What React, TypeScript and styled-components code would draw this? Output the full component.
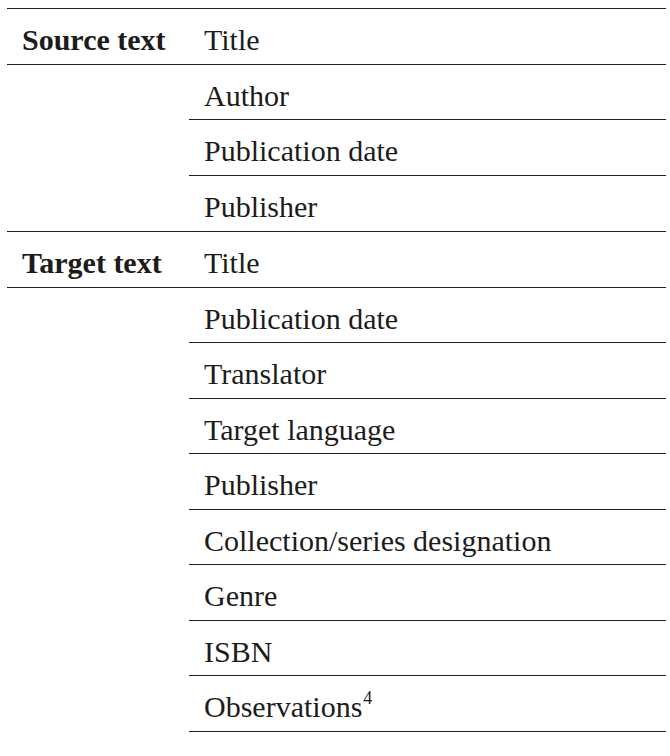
import styled, { createGlobalStyle } from "styled-components";

const GlobalStyle = createGlobalStyle`
  body {
    margin: 0;
    background: #ffffff;
    color: #1c1c1c;
    font-family: "Liberation Serif", "Times New Roman", serif;
  }
`;

const Page = styled.div`
  padding: 8px 4px 0 7px;
`;

const Table = styled.div`
  width: 659px;
`;

const Group = styled.section`
  border-top: 1px solid #1f1f1f;
`;

const Row = styled.div`
  display: grid;
  grid-template-columns: 182px 1fr;
`;

const Cell = styled.div<{ $ruled: boolean }>`
  height: 40.5px;
  padding: 14px 0 0 15px;
  font-size: 30px;
  line-height: 34px;
  border-bottom: 1px solid ${(p) => (p.$ruled ? "#1f1f1f" : "transparent")};
`;

const Label = styled(Cell)`
  font-weight: 700;
`;

const Note = styled.sup`
  font-size: 18px;
  line-height: 0;
  vertical-align: 13px;
  margin-left: 1px;
`;

type GroupData = { label: string; items: React.ReactNode[] };

const groups: GroupData[] = [
  {
    label: "Source text",
    items: ["Title", "Author", "Publication date", "Publisher"],
  },
  {
    label: "Target text",
    items: [
      "Title",
      "Publication date",
      "Translator",
      "Target language",
      "Publisher",
      "Collection/series designation",
      "Genre",
      "ISBN",
      <>
        Observations<Note>4</Note>
      </>,
    ],
  },
];

function App() {
  return (
    <Page>
      <GlobalStyle />
      <Table>
        {groups.map((g, gi) => (
          <Group key={g.label}>
            {g.items.map((item, i) => {
              // the next group's top border closes this one
              const closedByNext =
                i === g.items.length - 1 && gi < groups.length - 1;
              return (
                <Row key={i}>
                  <Label $ruled={i === 0}>{i === 0 ? g.label : ""}</Label>
                  <Cell $ruled={!closedByNext}>{item}</Cell>
                </Row>
              );
            })}
          </Group>
        ))}
      </Table>
    </Page>
  );
}

export default App;
